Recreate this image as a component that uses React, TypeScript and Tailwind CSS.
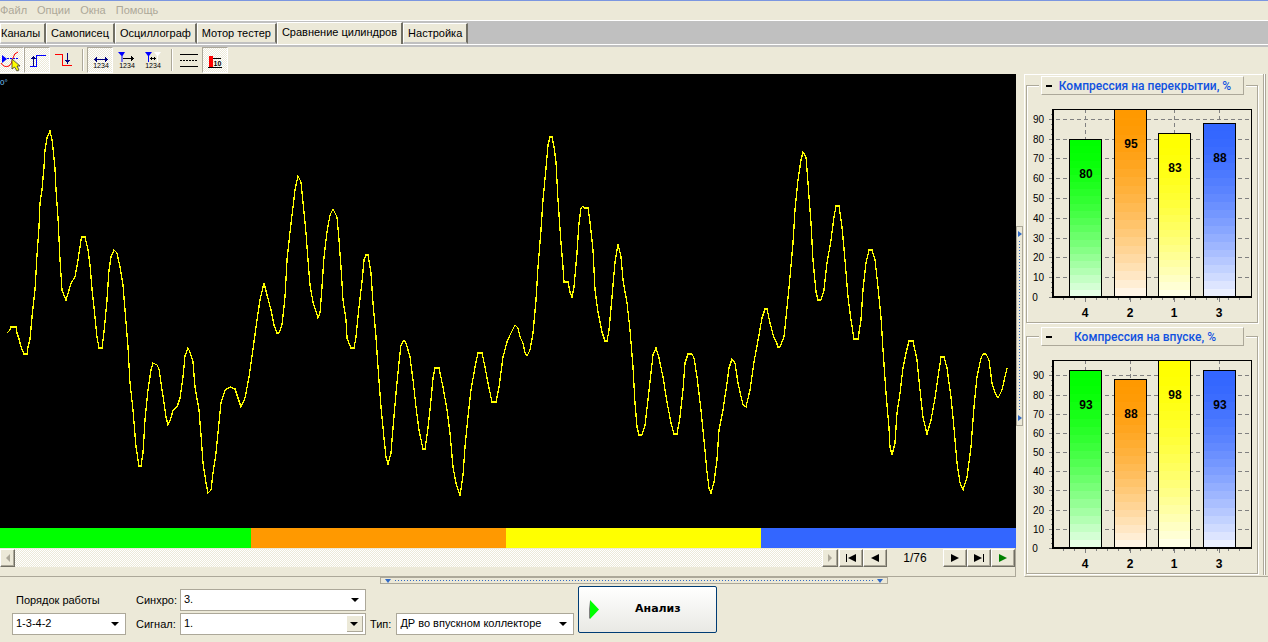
import React, { useState } from 'react';

const checker = 'bg-[repeating-conic-gradient(#ffffff_0_25%,#ece9d8_0_50%)] bg-[length:2px_2px]';
const raised =
  'border border-t-white border-l-white border-r-[#716f64] border-b-[#716f64] shadow-[inset_-1px_-1px_0_#aca899] bg-[#ece9d8]';

const menuItems = ['Файл', 'Опции', 'Окна', 'Помощь'];

const tabs = ['Каналы', 'Самописец', 'Осциллограф', 'Мотор тестер', 'Сравнение цилиндров', 'Настройка'];

// Pressure trace, one "x,y" pair per sample
const trace = `7,259 10,256 11,253 16,253 17,259 19,265 21,273 24,280 27,280 28,273 30,265 32,243 35,216 37,181
39,153 40,129 42,116 44,93 45,76 47,64 50,57 52,66 53,74 55,94 56,116 58,144 60,186 62,216 64,221 66,226
69,216 71,209 75,203 78,186 81,166 82,163 85,163 88,176 90,191 92,215 95,243 97,263 99,274 102,274 104,258
107,226 109,196 111,183 114,176 117,179 120,193 123,211 125,236 128,273 130,309 133,336 136,373 139,392
141,392 143,379 145,346 148,316 151,296 153,289 157,291 159,295 161,309 164,329 166,343 168,351 171,344
173,336 177,333 180,324 183,303 185,282 188,274 190,278 193,288 195,313 199,336 201,361 203,389 206,409
208,419 211,416 213,399 216,379 219,349 221,329 225,316 230,313 235,315 238,324 241,333 245,324 249,303
253,275 257,246 260,226 264,209 267,221 271,236 274,251 277,259 279,259 282,251 285,223 287,186 290,158
293,133 295,116 298,102 301,108 303,128 306,159 308,186 310,211 313,228 318,244 320,239 322,213 324,183
327,158 330,141 333,135 337,143 339,166 341,193 343,226 346,246 347,264 351,274 354,274 356,263 359,233
362,208 364,186 366,181 368,181 371,199 373,229 376,263 378,293 381,333 384,364 386,383 388,390 391,379
393,354 396,319 399,289 401,271 404,266 406,269 410,283 413,306 416,333 419,356 423,375 425,375 428,354
431,326 433,304 435,294 439,294 443,313 447,336 450,359 453,393 456,409 460,422 463,401 465,373 468,343
471,316 475,293 478,279 482,279 485,293 488,309 492,328 496,328 499,313 503,283 507,268 510,261 515,251
518,254 520,263 523,269 525,279 527,282 530,276 533,259 536,226 538,193 541,156 543,126 546,94 548,71
550,63 552,63 554,73 556,88 558,126 561,169 563,193 564,208 568,208 570,218 572,223 574,213 577,179 579,149
581,134 583,132 584,134 588,134 590,148 593,176 595,216 598,238 602,258 605,267 607,267 609,256 612,223
615,188 618,170 621,183 623,206 627,229 630,256 633,293 635,329 637,353 639,361 642,361 645,351 648,326
651,299 653,281 656,274 659,284 663,303 667,328 671,349 674,360 677,360 680,343 683,316 685,289 688,280
692,280 694,284 697,303 701,336 704,366 707,398 709,414 711,419 714,408 717,386 719,356 723,336 727,309
729,294 732,285 735,289 738,309 743,331 746,333 750,316 754,288 759,261 762,244 765,235 767,235 770,249
774,264 776,267 778,273 780,273 784,263 787,234 790,203 793,169 795,136 798,106 801,86 803,78 806,83
808,109 811,149 813,186 816,218 818,226 821,226 824,216 827,189 831,166 834,143 836,132 839,132 842,153
845,186 848,223 851,246 854,265 858,265 861,246 863,216 866,189 869,176 872,176 875,186 878,213 881,243
883,276 886,319 889,354 890,373 892,381 895,369 897,339 900,319 903,294 906,279 909,267 913,267 917,286
920,316 923,343 927,360 931,346 935,324 938,303 941,283 944,283 947,294 951,323 954,354 957,389 960,409
963,416 967,403 971,373 974,333 977,303 981,284 983,280 986,280 989,286 992,309 995,319 998,324 1002,316
1007,294`;

type Bar = { cylinder: number; value: number; rgb: [number, number, number] };

const green: [number, number, number] = [0, 255, 0];
const orange: [number, number, number] = [255, 153, 0];
const yellow: [number, number, number] = [255, 255, 0];
const blue: [number, number, number] = [51, 102, 255];

const overlapBars: Bar[] = [
  { cylinder: 4, value: 80, rgb: green },
  { cylinder: 2, value: 95, rgb: orange },
  { cylinder: 1, value: 83, rgb: yellow },
  { cylinder: 3, value: 88, rgb: blue },
];

const intakeBars: Bar[] = [
  { cylinder: 4, value: 93, rgb: green },
  { cylinder: 2, value: 88, rgb: orange },
  { cylinder: 1, value: 98, rgb: yellow },
  { cylinder: 3, value: 93, rgb: blue },
];

const BANDS = 22;
const barX = [42, 87, 131, 176];

const fade = (rgb: [number, number, number], i: number) => {
  const t = 0.9 * Math.pow(i / (BANDS - 1), 1.6);
  return `rgb(${rgb.map((c) => Math.round(c + (255 - c) * t)).join(',')})`;
};

const BarChart: React.FC<{ bars: Bar[]; max: number }> = ({ bars, max }) => {
  const top = 14;
  const bottom = 202;
  const y = (v: number) => Math.round(bottom - (v / max) * (bottom - top));

  return (
    <svg viewBox="0 0 230 227" className="block w-full" fontFamily="'Liberation Sans', Arial, sans-serif">
      <g shapeRendering="crispEdges">
        {[10, 20, 30, 40, 50, 60, 70, 80, 90].map((v) => (
          <line key={v} x1="22" x2="224" y1={y(v) + 0.5} y2={y(v) + 0.5} stroke="#808080" strokeDasharray="4 3" />
        ))}
        {Array.from({ length: Math.floor(max / 2.5) }, (_, i) => (
          <line key={i} x1="24" x2="26" y1={y(i * 2.5) + 0.5} y2={y(i * 2.5) + 0.5} stroke="#808080" />
        ))}
        {barX.map((x) => (
          <line key={x} x1={x + 16.5} x2={x + 16.5} y1={top} y2={bottom} stroke="#808080" strokeDasharray="4 3" />
        ))}
        {Array.from({ length: 17 }, (_, i) => (
          <line key={i} x1={36.5 + i * 11} x2={36.5 + i * 11} y1="203" y2="205" stroke="#808080" />
        ))}
        {barX.map((x) => (
          <line key={x} x1={x + 16.5} x2={x + 16.5} y1="203" y2="207" stroke="#808080" />
        ))}
        {bars.map((bar, n) => {
          const barTop = y(bar.value);
          const bandY = (i: number) => Math.round(barTop + (i * (bottom - barTop)) / BANDS);
          return (
            <g key={bar.cylinder}>
              {Array.from({ length: BANDS }, (_, i) => (
                <rect
                  key={i}
                  x={barX[n]}
                  y={bandY(i)}
                  width="33"
                  height={bandY(i + 1) - bandY(i)}
                  fill={fade(bar.rgb, i)}
                />
              ))}
              <rect x={barX[n] + 0.5} y={barTop + 0.5} width="32" height={bottom - barTop} fill="none" stroke="#000" />
            </g>
          );
        })}
        <rect x="25.5" y="14.5" width="199" height="188" fill="none" stroke="#000" />
        <path d="M26 14V203M25 202H225" stroke="#000" strokeWidth="2" />
        <path d="M22 202.5H25" stroke="#808080" />
      </g>
      {[0, 10, 20, 30, 40, 50, 60, 70, 80, 90].map((v) => (
        <text key={v} x={v ? 17 : 8} y={y(v) + 4} fontSize="10" textAnchor={v ? 'end' : 'middle'}>
          {v}
        </text>
      ))}
      {bars.map((bar, n) => (
        <g key={bar.cylinder} fontSize="12" fontWeight="bold" textAnchor="middle">
          <text x={barX[n] + 17} y={y(bar.value) + 39}>{bar.value}</text>
          <text x={barX[n] + 16} y="222">{bar.cylinder}</text>
        </g>
      ))}
    </svg>
  );
};

const ChartGroup: React.FC<{ title: string; bars: Bar[]; max: number }> = ({ title, bars, max }) => {
  const [open, setOpen] = useState(true);

  return (
    <fieldset className="min-w-0 border border-[#aca899] shadow-[1px_1px_0_#fff,inset_1px_1px_0_#fff]">
      <legend className="mx-auto bg-[#ece9d8] px-0.5">
        <button
          onClick={() => setOpen(!open)}
          className="flex h-[19px] w-[203px] items-center border border-t-white border-l-white border-r-[#aca899] border-b-[#aca899] px-1 font-[Roboto,sans-serif] text-[12px] font-medium text-[#1152e0]"
        >
          <span className="h-0.5 w-1.5 bg-black" />
          <span className="flex-1 text-center whitespace-nowrap">{title}</span>
        </button>
      </legend>
      {open && <BarChart bars={bars} max={max} />}
    </fieldset>
  );
};

const Digits = () => (
  <text x="14" y="21" fontSize="7" textAnchor="middle" fill="#000" stroke="none">
    1234
  </text>
);

const ToolButton: React.FC<{ label: string; pressed?: boolean; children: React.ReactNode }> = ({
  label,
  pressed,
  children,
}) => (
  <button
    aria-label={label}
    aria-pressed={!!pressed}
    className={`size-[26px] shrink-0 border ${
      pressed ? `border-t-[#aca899] border-l-[#aca899] border-r-white border-b-white ${checker}` : 'border-transparent'
    }`}
  >
    <svg viewBox="1 1 24 24" className="block size-6" fill="none" fontFamily="'Liberation Sans', Arial, sans-serif">
      {children}
    </svg>
  </button>
);

const Separator = () => (
  <div className="mr-[3px] ml-1.5 h-[22px] w-0.5 border-l border-l-[#aca899] border-r border-r-white" />
);

const Toolbar = () => (
  <div className="flex h-[27px] items-start overflow-hidden">
    <div className="-ml-0.5 flex items-center">
      <ToolButton label="Курсор" pressed>
        <path d="M4 8l5 4-5 4z" fill="#0000ff" />
        <path d="M9 11.5h11" stroke="#0000ff" strokeDasharray="2 1" />
        <path d="M3 16q3 5 8 3q3-2 4-8q1-5 5-6" stroke="#f00" />
        <path d="M14 12v10l2.500-2 2.500 4 2-1-2-4h3z" fill="#ff0" stroke="#333" strokeWidth=".8" />
      </ToolButton>
      <ToolButton label="Фронт" pressed>
        <g shapeRendering="crispEdges">
          <path d="M6 19.500h6.500v-11h9.500" stroke="#0000ff" />
          <path d="M9.500 19V9M8 10.500h3M7 11.500h5" stroke="#000080" />
        </g>
      </ToolButton>
      <ToolButton label="Спад">
        <g shapeRendering="crispEdges">
          <path d="M5 7.500h7.500v11h9.500" stroke="#f00" />
          <path d="M17.500 6v11M15 13.500h5M16 14.500h3" stroke="#000080" />
        </g>
      </ToolButton>
    </div>
    <div className="flex items-center">
      <Separator />
      <ToolButton label="Ширина" pressed>
        <g shapeRendering="crispEdges" stroke="#000080">
          <path d="M7 12.500h14" />
          <path d="M8.500 11v3M9.500 10v5M19.500 11v3M18.500 10v5" />
        </g>
        <Digits />
      </ToolButton>
      <ToolButton label="Сдвиг метки">
        <path d="M5 5h7l-2.500 4v6h-1V9z" fill="#0000ff" />
        <path d="M10 11.500h11M18.500 9v5M19.500 10v3" stroke="#000" shapeRendering="crispEdges" />
        <Digits />
      </ToolButton>
      <ToolButton label="Между метками">
        <path d="M6 5h7l-3 4v6H9V9z" fill="#0000ff" />
        <path d="M15 5h7l-3 4v6h-1V9z" fill="#fff" />
        <path d="M11 11.500h6M12.500 10v3M15.500 10v3" stroke="#000" shapeRendering="crispEdges" />
        <Digits />
      </ToolButton>
      <Separator />
      <ToolButton label="Линии">
        <g stroke="#000" shapeRendering="crispEdges">
          <path d="M4 7.500h18M4 19.500h18" />
          <path d="M4 13.500h18" strokeDasharray="2 1" />
        </g>
      </ToolButton>
      <ToolButton label="Диаграмма" pressed>
        <g shapeRendering="crispEdges">
          <path d="M7 9h4v11H7z" fill="#f00" />
          <path d="M11 11.500h8M6 20.500h14" stroke="#000" />
        </g>
        <text x="15.500" y="19" fontSize="7" fontWeight="bold" textAnchor="middle" fill="#000">
          10
        </text>
      </ToolButton>
    </div>
  </div>
);

const NavButton: React.FC<{ label: string; d: string; color?: string }> = ({ label, d, color = '#000' }) => (
  <button aria-label={label} className={`flex h-[18px] w-6 items-center justify-center ${raised}`}>
    <svg viewBox="0 0 12 8" className="h-2 w-3">
      <path d={d} fill={color} />
    </svg>
  </button>
);

const SelectBox: React.FC<{ id: string; value: string; width: string; button?: boolean }> = ({
  id,
  value,
  width,
  button,
}) => (
  <div className={`relative h-[22px] border border-[#aca899] bg-white ${width}`}>
    <select id={id} className="block h-[19px] w-full appearance-none bg-transparent pr-5 pl-[3px] text-[11px] outline-none">
      <option>{value}</option>
    </select>
    <div
      className={`pointer-events-none absolute top-0.5 right-0.5 flex h-4 w-4 items-center justify-center ${
        button ? 'border-r border-b border-[#aca899] bg-[#ece9d8]' : ''
      }`}
    >
      <svg viewBox="0 0 8 4" className="h-1 w-2">
        <path d="M0 0h8L4 4z" />
      </svg>
    </div>
  </div>
);

export default function App() {
  const [active, setActive] = useState(4);

  return (
    <div className="flex min-h-screen flex-col overflow-x-hidden border-t border-t-[#7b96e0] bg-[#ece9d8] font-['Liberation_Sans',Arial,sans-serif] text-[11px] text-black">
      {/* Menu */}
      <nav className="flex h-[19px] items-center gap-2.5 text-[#aca899]">
        {menuItems.map((item) => (
          <button key={item}>{item}</button>
        ))}
      </nav>

      {/* Tabs */}
      <div className="flex h-[27px] items-start border-t border-b-2 border-t-white border-b-[#c0c0c0] bg-[#c0c0c0]">
        <div role="tablist" className="flex h-6 w-full items-end border-b border-b-white pt-px">
          {tabs.map((tab, i) => (
            <button
              key={tab}
              role="tab"
              aria-selected={i === active}
              onClick={() => setActive(i)}
              className={`border-t border-l border-t-white border-l-white border-r-2 border-r-[#716f64] bg-[#ece9d8] px-1 whitespace-nowrap ${
                i === active ? 'h-full pb-0.5' : 'h-[21px] border-b-2 border-b-[#c0c0c0] first:pl-0'
              }`}
            >
              {tab}
            </button>
          ))}
        </div>
      </div>

      <Toolbar />

      <div className="flex flex-1">
        <main className="flex min-w-0 flex-1 flex-col">
          {/* Scope */}
          <svg viewBox="0 0 1016 454" preserveAspectRatio="none" className="block min-h-0 w-full flex-1 bg-black">
            <text x="0" y="11" fontSize="8" fill="#7cc8ff">0°</text>
            <polyline
              points={trace}
              fill="none"
              stroke="#ffff00"
              strokeWidth="1.300"
              shapeRendering="crispEdges"
            />
          </svg>
          <div className="grid h-5 grid-cols-[251fr_255fr_255fr_255fr]">
            <div className="bg-[#00ff00]" />
            <div className="bg-[#ff9900]" />
            <div className="bg-[#ffff00]" />
            <div className="bg-[#3366ff]" />
          </div>

          {/* Scroll bar and paging */}
          <div className="flex h-[29px] items-start border-r border-b border-[#aca899] pt-px">
            <div className={`flex h-[18px] flex-1 justify-between ${checker}`}>
              <button aria-label="Влево" className={`flex w-[15px] items-center justify-center ${raised}`}>
                <svg viewBox="0 0 4 8" className="h-2 w-1"><path d="M4 0v8L0 4z" fill="#aca899" /></svg>
              </button>
              <button aria-label="Вправо" className={`flex w-4 items-center justify-center ${raised}`}>
                <svg viewBox="0 0 4 8" className="h-2 w-1"><path d="M0 0v8l4-4z" fill="#aca899" /></svg>
              </button>
            </div>
            <div className="flex pl-px">
              <NavButton label="Первый" d="M1 0h1v8H1zM11 0v8L3 4z" />
              <NavButton label="Предыдущий" d="M10 0v8L2 4z" />
            </div>
            <div className="w-14 text-center text-[12px] leading-[18px]">1/76</div>
            <NavButton label="Следующий" d="M2 0v8l8-4z" />
            <NavButton label="Последний" d="M1 0v8l8-4zM10 0h1v8h-1z" />
            <NavButton label="Пуск" d="M2 0v8l8-4z" color="#008000" />
          </div>
        </main>

        {/* Vertical splitter */}
        <div className="flex w-2 items-center">
          <div className="flex h-[200px] w-[7px] flex-col items-center justify-between border border-[#aca899] py-1">
            <svg viewBox="0 0 4 6" className="h-1.5 w-1"><path d="M0 0l4 3-4 3z" fill="#316ac5" /></svg>
            <div className="my-1 w-px flex-1 bg-[repeating-linear-gradient(to_bottom,#316ac5_0_1px,transparent_1px_3px)]" />
            <svg viewBox="0 0 4 6" className="h-1.5 w-1"><path d="M0 0l4 3-4 3z" fill="#316ac5" /></svg>
          </div>
        </div>

        <aside className="flex w-[239px] flex-col gap-1 border-t border-b border-l border-t-white border-b-[#aca899] border-l-white pt-px pr-[5px] pl-px">
          <ChartGroup title="Компрессия на перекрытии, %" bars={overlapBars} max={95} />
          <ChartGroup title="Компрессия на впуске, %" bars={intakeBars} max={98} />
        </aside>
        <div className="w-[5px] border-b border-b-[#aca899] pb-px">
          <div className="h-full w-[3px] border-x border-l-[#aca899] border-r-[#aca899] bg-white" />
        </div>
      </div>

      {/* Horizontal splitter */}
      <div className="mx-auto flex h-[7px] w-2/5 items-center gap-1 border border-[#aca899] px-1">
        <svg viewBox="0 0 6 4" className="h-1 w-1.5"><path d="M0 0h6L3 4z" fill="#316ac5" /></svg>
        <div className="h-px flex-1 bg-[repeating-linear-gradient(to_right,#316ac5_0_1px,transparent_1px_3px)]" />
        <svg viewBox="0 0 6 4" className="h-1 w-1.5"><path d="M0 0h6L3 4z" fill="#316ac5" /></svg>
      </div>

      {/* Settings */}
      <footer className="flex h-[58px] items-start pt-0.5 pl-3">
        <div className="flex flex-col gap-0.5 pt-[3px]">
          <label htmlFor="order" className="pl-1 leading-[22px]">Порядок работы</label>
          <SelectBox id="order" value="1-3-4-2" width="w-[114px]" />
        </div>
        <div className="ml-2.5 grid grid-cols-[auto_auto] items-center gap-x-[3px] gap-y-0.5 pt-[3px]">
          <label htmlFor="sync">Синхро:</label>
          <SelectBox id="sync" value="3." width="w-[186px]" />
          <label htmlFor="signal">Сигнал:</label>
          <SelectBox id="signal" value="1." width="w-[186px]" button />
        </div>
        <div className="mt-[27px] ml-1 flex items-center gap-[5px]">
          <label htmlFor="type">Тип:</label>
          <SelectBox id="type" value="ДР во впускном коллекторе" width="w-[178px]" />
        </div>
        <button className="ml-1 flex h-[47px] w-[139px] items-center rounded-xs border border-[#003c74] bg-gradient-to-b from-white to-[#e9e9e4] pl-2.5 font-['DejaVu_Sans',Verdana,sans-serif] text-[11px] font-bold">
          <svg viewBox="0 0 10 20" className="h-5 w-2.5">
            <path d="M0 1v18l2-2z" fill="#808080" />
            <path d="M1 0v19l9-9.500z" fill="#00ff00" />
          </svg>
          <span className="flex-1 text-center">Анализ</span>
        </button>
      </footer>
    </div>
  );
}
